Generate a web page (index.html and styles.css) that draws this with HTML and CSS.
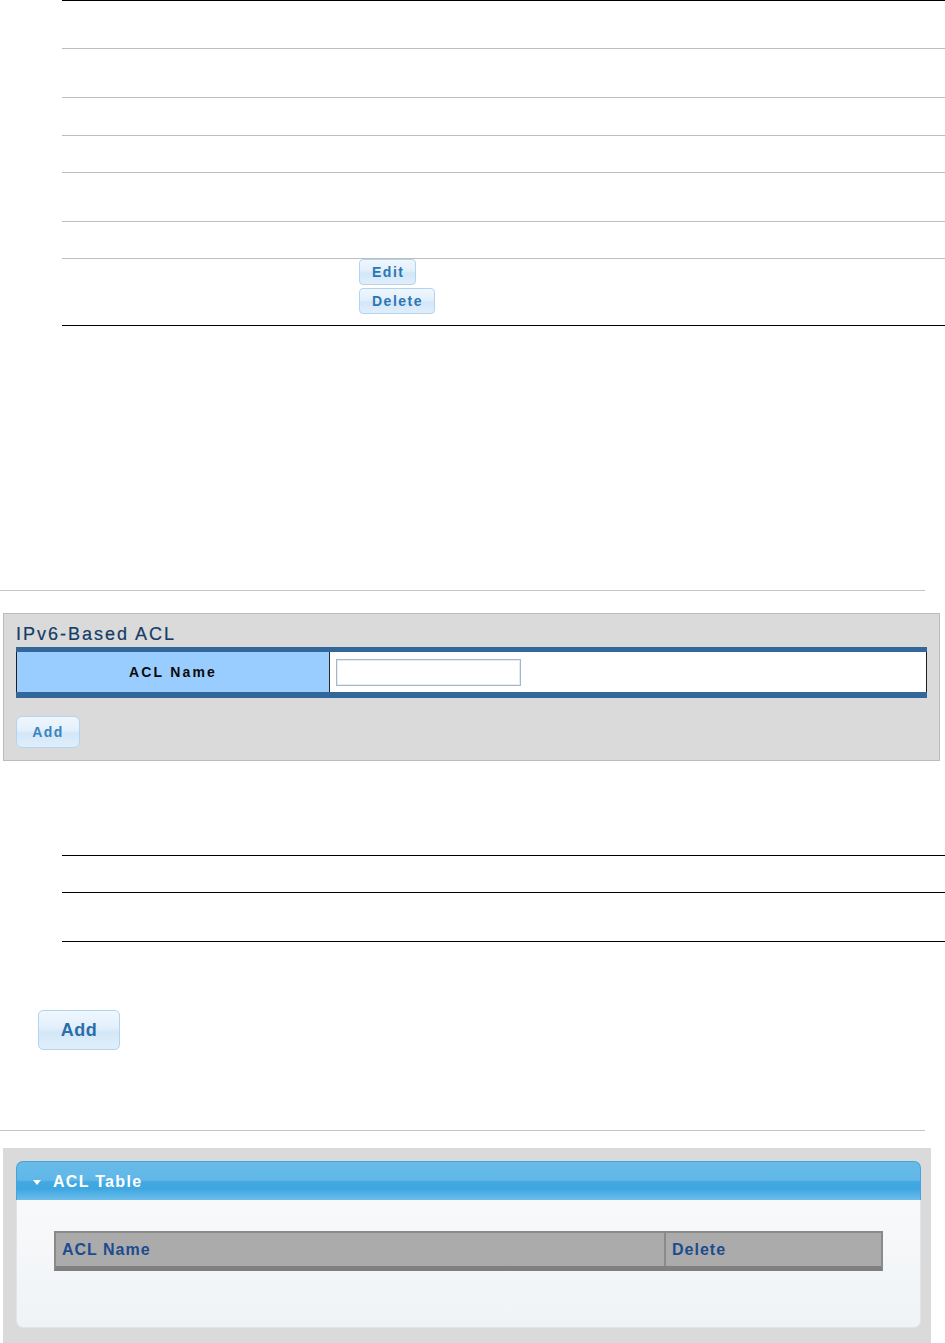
FILE: index.html
```html
<!DOCTYPE html>
<html lang="en">
<head>
<meta charset="utf-8">
<title>IPv6-Based ACL</title>
<link rel="stylesheet" href="styles.css">
</head>
<body>
<div class="grid-table">
  <div class="tr r48"><div class="td c1"></div><div class="td"></div></div>
  <div class="tr r49"><div class="td c1"></div><div class="td"></div></div>
  <div class="tr r38"><div class="td c1"></div><div class="td"></div></div>
  <div class="tr r37"><div class="td c1"></div><div class="td"></div></div>
  <div class="tr r49"><div class="td c1"></div><div class="td"></div></div>
  <div class="tr r37"><div class="td c1"></div><div class="td"></div></div>
  <div class="tr r67 last">
    <div class="td c1"></div>
    <div class="td actions">
      <button class="btn btn-sm">Edit</button>
      <button class="btn btn-sm">Delete</button>
    </div>
  </div>
</div>

<div class="rule rule-1"></div>

<section class="panel">
  <h2 class="panel-title">IPv6-Based ACL</h2>
  <div class="form-table">
    <div class="label-cell">ACL Name</div>
    <div class="value-cell"><input type="text" class="text-input"></div>
  </div>
  <button class="btn btn-md">Add</button>
</section>

<div class="grid-table table-2">
  <div class="tr r37 dark"></div>
  <div class="tr r49 dark"></div>
</div>

<button class="btn btn-lg">Add</button>

<div class="rule rule-2"></div>

<section class="gray-area">
  <div class="acl-box">
    <div class="acl-head"><span class="caret"></span><span class="acl-title">ACL Table</span></div>
    <div class="acl-body">
      <div class="acl-table">
        <div class="th th-name">ACL Name</div>
        <div class="th th-del">Delete</div>
      </div>
    </div>
  </div>
</section>
</body>
</html>
```

FILE: styles.css
```css
* { box-sizing: border-box; }

html, body {
  margin: 0;
  padding: 0;
  background: #ffffff;
  font-family: "Liberation Sans", Arial, sans-serif;
}

/* ---------- plain line tables ---------- */
.grid-table {
  margin-left: 62px;
  border-top: 1px solid #000;
}
.tr {
  display: grid;
  grid-template-columns: 297px 1fr;
  border-bottom: 1px solid #bdbdbd;
}
.tr.last, .tr.dark { border-bottom-color: #000; }
.r48 { height: 48px; }
.r49 { height: 49px; }
.r38 { height: 38px; }
.r37 { height: 37px; }
.r67 { height: 67px; }

.actions {
  display: flex;
  flex-direction: column;
  align-items: flex-start;
  gap: 3px;
}

/* ---------- buttons ---------- */
.btn {
  display: block;
  font-family: "Liberation Sans", Arial, sans-serif;
  font-weight: bold;
  color: #2c77b3;
  background: linear-gradient(to bottom, #eff7fe 0%, #e2effb 45%, #d3e7f8 55%, #e0eefa 100%);
  border: 1px solid #b3d4ee;
  cursor: pointer;
  padding: 0;
}
.btn-sm {
  height: 26px;
  font-size: 14px;
  letter-spacing: 1.5px;
  padding: 0 11px 0 12px;
  border-radius: 4px;
  line-height: 24px;
}
.btn-md {
  margin-top: 18px;
  width: 64px;
  height: 32px;
  font-size: 14px;
  letter-spacing: 1.5px;
  border-radius: 6px;
  color: #3a83bd;
}
.btn-lg {
  margin: 68px 0 0 38px;
  width: 82px;
  height: 40px;
  font-size: 18px;
  letter-spacing: 0.5px;
  border-radius: 5px;
  color: #2a6ea8;
}

/* ---------- rules ---------- */
.rule {
  width: 925px;
  height: 1px;
  background: #c4c4c4;
}
.rule-1 { margin-top: 264px; }
.rule-2 { margin-top: 80px; }

/* ---------- IPv6 panel ---------- */
.panel {
  margin: 22px 0 0 3px;
  width: 937px;
  background: #dadada;
  border: 1px solid #bcbcbc;
  padding: 10px 12px 12px 12px;
}
.panel-title {
  margin: 0 0 3px 0;
  font-size: 18px;
  line-height: 20px;
  font-weight: normal;
  letter-spacing: 2px;
  color: #143c66;
  -webkit-text-stroke: 0.2px #143c66;
}
.form-table {
  display: grid;
  grid-template-columns: 314px 1fr;
  border-top: 5px solid #336699;
  border-bottom: 6px solid #336699;
  height: 51px;
}
.label-cell {
  background: #99ccff;
  border-left: 1px solid #1e1e1e;
  border-right: 1px solid #2b2b2b;
  display: flex;
  align-items: center;
  justify-content: center;
  font-size: 14px;
  font-weight: bold;
  letter-spacing: 2.2px;
  color: #0a0a0a;
}
.value-cell {
  background: #fff;
  border-right: 1px solid #1e1e1e;
  display: flex;
  align-items: center;
  padding-left: 6px;
}
.text-input {
  width: 185px;
  height: 27px;
  border: 1px solid #a3b8cc;
  box-shadow: inset 0 0 0 1px #e4ebf2;
  background: #fff;
  margin: 0;
  padding: 0 4px;
}

/* ---------- second plain table ---------- */
.table-2 { margin-top: 94px; }

/* ---------- ACL table ---------- */
.gray-area {
  margin: 17px 0 0 3px;
  width: 928px;
  background: #dadada;
  padding: 13px 10px 20px 13px;
}
.acl-box { width: 905px; }
.acl-head {
  height: 39px;
  border: 1px solid #45a2dc;
  border-bottom: none;
  border-radius: 7px 7px 0 0;
  background: linear-gradient(to bottom,
    #67bbe9 0%, #60b7e7 48%, #42a8e1 52%, #3ea6e1 70%, #6cbdea 100%);
  display: flex;
  align-items: center;
  padding-left: 16px;
  padding-top: 1px;
}
.caret {
  width: 0;
  height: 0;
  border-left: 4px solid transparent;
  border-right: 4px solid transparent;
  border-top: 5px solid #ffffff;
  margin-right: 12px;
  margin-top: 1px;
}
.acl-title {
  color: #ffffff;
  font-size: 16px;
  font-weight: bold;
  letter-spacing: 1.3px;
}
.acl-body {
  height: 128px;
  border: 1px solid #dfe4e8;
  border-top: none;
  border-radius: 0 0 7px 7px;
  background: linear-gradient(to bottom, #f8f9fb 0%, #f5f7f9 40%, #eff3f6 100%);
  padding: 31px 0 0 37px;
}
.acl-table {
  width: 829px;
  height: 40px;
  display: grid;
  grid-template-columns: 610px 1fr;
  background: #ababab;
  border: 2px solid #8a8a8a;
  border-bottom: 5px solid #808080;
}
.th {
  display: flex;
  align-items: center;
  padding-left: 6px;
  font-size: 16px;
  font-weight: bold;
  letter-spacing: 1px;
  color: #1c4c8f;
}
.th-name { border-right: 2px solid #8a8a8a; }
```
